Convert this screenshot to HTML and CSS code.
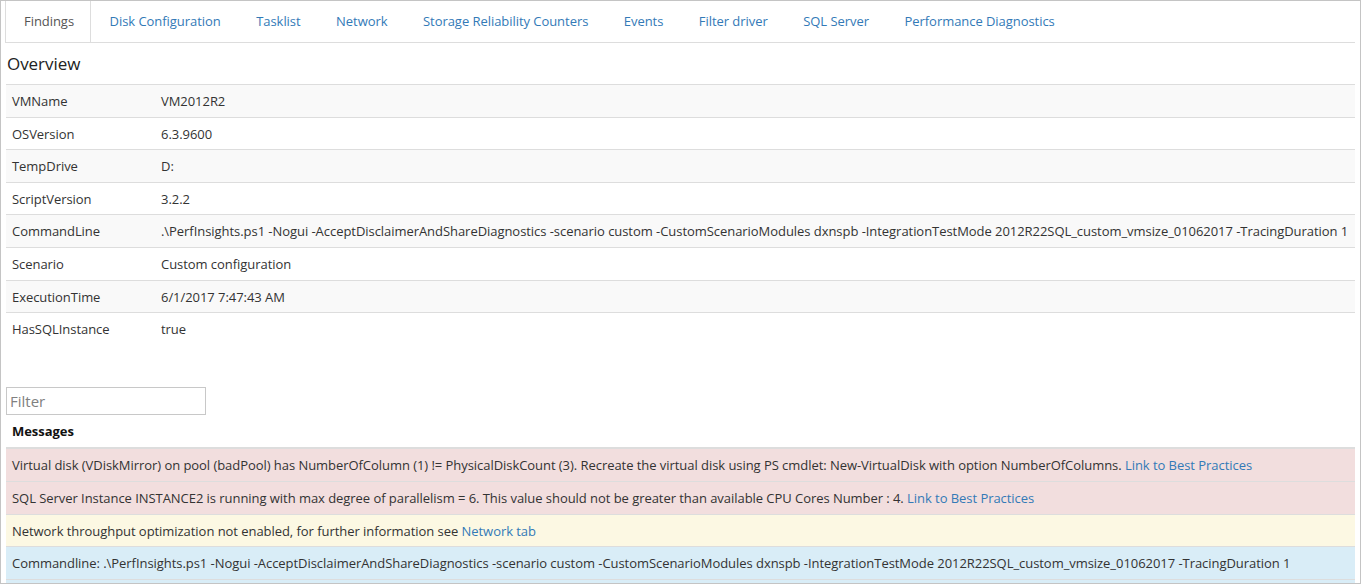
FILE: index.html
```html
<!DOCTYPE html>
<html>
<head>
<meta charset="utf-8">
<link rel="stylesheet" href="styles.css">
</head>
<body>
<div class="frame">
  <ul class="tabs">
    <li class="tab active">Findings</li>
    <li class="tab">Disk Configuration</li>
    <li class="tab">Tasklist</li>
    <li class="tab">Network</li>
    <li class="tab">Storage Reliability Counters</li>
    <li class="tab">Events</li>
    <li class="tab">Filter driver</li>
    <li class="tab">SQL Server</li>
    <li class="tab">Performance Diagnostics</li>
  </ul>
  <h2 class="title">Overview</h2>
  <table class="grid striped">
    <colgroup><col class="keycol"><col></colgroup>
    <tbody>
      <tr><td>VMName</td><td>VM2012R2</td></tr>
      <tr><td>OSVersion</td><td>6.3.9600</td></tr>
      <tr><td>TempDrive</td><td>D:</td></tr>
      <tr><td>ScriptVersion</td><td>3.2.2</td></tr>
      <tr><td>CommandLine</td><td>.\PerfInsights.ps1 -Nogui -AcceptDisclaimerAndShareDiagnostics -scenario custom -CustomScenarioModules dxnspb -IntegrationTestMode 2012R22SQL_custom_vmsize_01062017 -TracingDuration 1</td></tr>
      <tr><td>Scenario</td><td>Custom configuration</td></tr>
      <tr><td>ExecutionTime</td><td>6/1/2017 7:47:43 AM</td></tr>
      <tr><td>HasSQLInstance</td><td>true</td></tr>
    </tbody>
  </table>
  <input class="filter" type="text" placeholder="Filter">
  <table class="grid messages">
    <thead><tr><th>Messages</th></tr></thead>
    <tbody>
      <tr class="danger"><td>Virtual disk (VDiskMirror) on pool (badPool) has NumberOfColumn (1) != PhysicalDiskCount (3). Recreate the virtual disk using PS cmdlet: New-VirtualDisk with option NumberOfColumns. <a href="#">Link to Best Practices</a></td></tr>
      <tr class="danger"><td>SQL Server Instance INSTANCE2 is running with max degree of parallelism = 6. This value should not be greater than available CPU Cores Number : 4. <a href="#">Link to Best Practices</a></td></tr>
      <tr class="warning"><td>Network throughput optimization not enabled, for further information see <a href="#">Network tab</a></td></tr>
      <tr class="info"><td>Commandline: .\PerfInsights.ps1 -Nogui -AcceptDisclaimerAndShareDiagnostics -scenario custom -CustomScenarioModules dxnspb -IntegrationTestMode 2012R22SQL_custom_vmsize_01062017 -TracingDuration 1</td></tr>
      <tr class="info"><td>&nbsp;</td></tr>
    </tbody>
  </table>
</div>
</body>
</html>
```
FILE: styles.css
```css
html, body {
  margin: 0;
  padding: 0;
  height: 100%;
  overflow: hidden;
  background: #fff;
}
body {
  font-family: "Open Sans", "Noto Sans", sans-serif;
  font-size: 13px;
  letter-spacing: -0.05px;
  color: #333;
}
.frame {
  box-sizing: border-box;
  height: 584px;
  border: 1px solid #c4c4c4;
  padding: 0 5px;
  overflow: hidden;
}
.tabs {
  list-style: none;
  margin: 0 0 0 -1px;
  padding: 0;
  display: flex;
  height: 41px;
  border-bottom: 1px solid #ddd;
}
.tab {
  padding: 0 15.5px 0 18px;
  line-height: 41px;
  color: #337ab7;
  border: 1px solid transparent;
  border-top: none;
  border-bottom: none;
}
.tab.active {
  color: #555;
  border-color: #ddd;
}
.title {
  margin: 0;
  height: 41px;
  font-size: 17px;
  font-weight: normal;
  line-height: 41px;
  color: #222;
  padding-left: 1px;
}
.grid {
  width: 100%;
  border-collapse: collapse;
}
.striped {
  table-layout: fixed;
}
.keycol {
  width: 149px;
}
.grid td, .grid th {
  text-align: left;
  padding: 7px 6px 6px;
  line-height: 18.6px;
  border-top: 1px solid #ddd;
  white-space: nowrap;
}
.striped tr:nth-child(odd) td {
  background: #f9f9f9;
}
.filter {
  display: block;
  margin: 42px 0 0;
  width: 200px;
  height: 28px;
  box-sizing: border-box;
  border: 1px solid #c8c8c8;
  padding: 0 3px;
  font-family: inherit;
  font-size: 15px;
  outline: none;
}
.filter::placeholder {
  color: #808080;
}
.messages th {
  border-top: none;
  border-bottom: 2px solid #ddd;
  font-weight: bold;
  color: #111;
  padding: 7px 6px 7px;
}
.messages tr.danger td { background: #f2dede; }
.messages tr.warning td { background: #fcf8e3; }
.messages tr.info td { background: #d9edf7; }
a {
  color: #337ab7;
  text-decoration: none;
}
```
